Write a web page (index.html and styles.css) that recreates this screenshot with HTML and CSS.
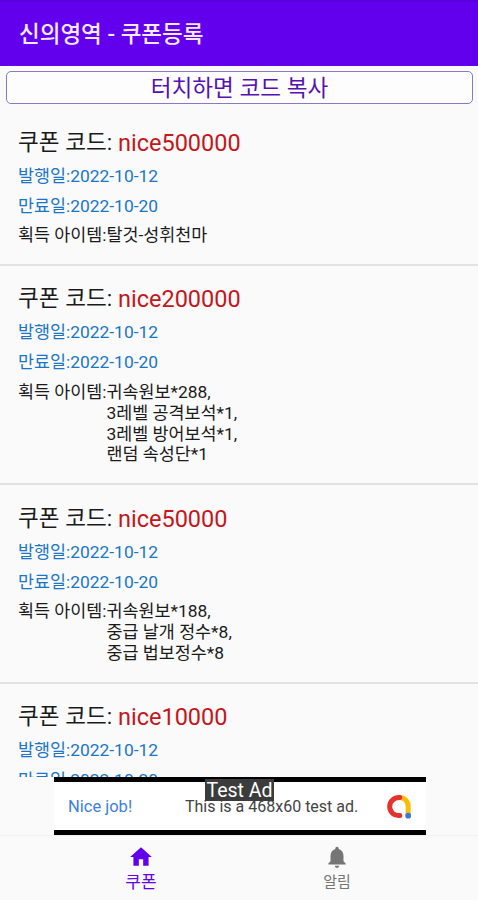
FILE: index.html
```html
<!DOCTYPE html>
<html lang="ko">
<head>
  <meta charset="UTF-8">
  <meta name="viewport" content="width=device-width, initial-scale=1">
  <title>신의영역 - 쿠폰등록</title>
  <link rel="stylesheet" href="styles.css">
</head>
<body>

  <header class="app-bar">
    <h1>신의영역 - 쿠폰등록</h1>
  </header>

  <main>
    <div class="notice">터치하면 코드 복사</div>

    <ul class="coupons">
      <li class="coupon">
        <div class="code"><span class="label">쿠폰 코드:</span><b>nice500000</b></div>
        <div class="date">발행일:2022-10-12</div>
        <div class="date">만료일:2022-10-20</div>
        <div class="items"><span class="label">획득 아이템:</span><p>탈것-성휘천마</p></div>
      </li>
      <li class="coupon">
        <div class="code"><span class="label">쿠폰 코드:</span><b>nice200000</b></div>
        <div class="date">발행일:2022-10-12</div>
        <div class="date">만료일:2022-10-20</div>
        <div class="items"><span class="label">획득 아이템:</span><p>귀속원보*288,<br>3레벨 공격보석*1,<br>3레벨 방어보석*1,<br>랜덤 속성단*1</p></div>
      </li>
      <li class="coupon">
        <div class="code"><span class="label">쿠폰 코드:</span><b>nice50000</b></div>
        <div class="date">발행일:2022-10-12</div>
        <div class="date">만료일:2022-10-20</div>
        <div class="items"><span class="label">획득 아이템:</span><p>귀속원보*188,<br>중급 날개 정수*8,<br>중급 법보정수*8</p></div>
      </li>
      <li class="coupon">
        <div class="code"><span class="label">쿠폰 코드:</span><b>nice10000</b></div>
        <div class="date">발행일:2022-10-12</div>
        <div class="date">만료일:2022-10-20</div>
      </li>
    </ul>
  </main>

  <div class="ad">
    <span class="ad-title">Nice job!</span>
    <span class="ad-text">This is a 468x60 test ad.</span>
    <svg class="ad-logo" viewBox="0 0 26 26" fill="none" stroke-width="5.2" stroke-linecap="round">
      <path d="M13 3.700c5.200 0 9 3.800 9 9v9.500" stroke="#fbbc04"/>
      <path d="M13.300 22.300c-6 .7-10.500-3.600-10.500-9.300 0-5.300 4.200-9.500 10.400-9.300" stroke="#e5322d"/>
      <circle cx="22" cy="22.500" r="3" fill="#3b78dc"/>
    </svg>
    <span class="ad-badge">Test Ad</span>
  </div>

  <nav class="tabs">
    <a class="tab active">
      <svg viewBox="0 0 24 24"><path d="M10 20v-6h4v6h5v-8h3L12 3 2 12h3v8z"/></svg>
      <span>쿠폰</span>
    </a>
    <a class="tab">
      <svg viewBox="0 0 24 24"><path d="M12 22c1.100 0 2-.9 2-2h-4c0 1.100.9 2 2 2zm6-6v-5c0-3.070-1.640-5.640-4.500-6.320V4c0-.83-.67-1.500-1.500-1.500s-1.500.67-1.500 1.500v.68C7.630 5.360 6 7.920 6 11v5l-2 2v1h16v-1l-2-2z"/></svg>
      <span>알림</span>
    </a>
  </nav>

</body>
</html>
```

FILE: styles.css
```css
* {
  box-sizing: border-box;
}
body {
  margin: 0;
  height: 900px;
  display: flex;
  flex-direction: column;
  overflow: hidden;
  font-family: Roboto, 'Noto Sans CJK KR', sans-serif;
  background-color: #fafafa;
  color: #1a1a1a;
}
.app-bar {
  height: 66px;
  flex: none;
  display: flex;
  align-items: center;
  padding: 0 19px 3px;
  background-color: #6200ee;
  border-top: 1px solid #5300cf;
}
h1 {
  margin: 0;
  font-size: 22.5px;
  font-weight: 500;
  color: #f3eafd;
}
main {
  height: 711px;
  flex: none;
  overflow: hidden;
}
.notice {
  height: 33px;
  margin: 5px 5px 5px 6px;
  border: 1.5px solid #8a78c4;
  border-radius: 5px;
  text-align: center;
  font-size: 22.6px;
  line-height: 33px;
  color: #5512b0;
  background-color: #fdfdfd;
}
.coupons {
  list-style: none;
  margin: 0;
  padding: 0;
}
.coupon {
  padding: 17.5px 18px 18.2px;
  border-bottom: 2px solid #e2e2e2;
}
.code {
  display: flex;
  font-size: 23.5px;
  line-height: 32px;
  margin-bottom: 2px;
}
.code .label {
  width: 100px;
  font-size: 22.6px;
}
.date {
  font-size: 17.4px;
  line-height: 30px;
  color: #1976c5;
}
.code b {
  font-weight: 400;
  color: #c4161c;
}
.items {
  display: flex;
  margin-top: 4.500px;
  font-size: 17.4px;
  line-height: 20.8px;
}
.items .label {
  width: 88.500px;
}
.items p {
  margin: 0;
}
.label {
  flex: none;
  white-space: nowrap;
}
.ad {
  position: relative;
  width: 372px;
  height: 58px;
  flex: none;
  margin-left: 54px;
  padding: 0 14px;
  display: flex;
  align-items: center;
  background-color: #fff;
  border-top: 5px solid #000;
  border-bottom: 5px solid #000;
  font-size: 16px;
}
.ad-title {
  width: 117px;
  font-size: 16.5px;
  color: #3d7fdb;
}
.ad-text {
  color: #444;
}
.ad-logo {
  width: 25px;
  height: 25px;
  margin-left: auto;
}
.ad-badge {
  position: absolute;
  left: 151px;
  top: -3px;
  width: 69px;
  height: 22px;
  text-align: center;
  font-size: 19.5px;
  line-height: 24px;
  color: #fff;
  background-color: #3c3c3c;
}
.tabs {
  flex: 1;
  display: flex;
  padding: 0 43px;
  border-top: 1px solid #f2f2f2;
}
.tab {
  flex: 1;
  display: flex;
  flex-direction: column;
  align-items: center;
  padding-top: 8px;
  font-size: 15px;
  line-height: 25px;
  color: #757575;
}
.tab svg {
  width: 26px;
  height: 26px;
  fill: currentColor;
}
.tab.active {
  font-size: 17px;
  color: #6200ee;
}
```
